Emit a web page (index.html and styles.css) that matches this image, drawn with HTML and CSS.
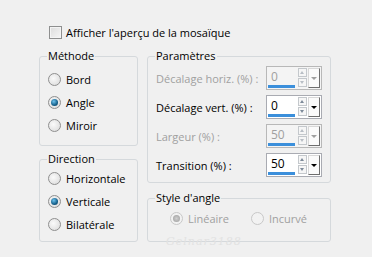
FILE: index.html
```html
<!DOCTYPE html>
<html lang="fr">
<head>
    <meta charset="UTF-8">
    <title>Mosaïque</title>
    <link rel="stylesheet" href="styles.css">
</head>
<body>
    <div class="dialog">
        <div class="check"><span class="box"></span>Afficher l'aperçu de la mosaïque</div>
        <div class="cols">
            <div class="col left">
                <fieldset class="group method">
                    <legend>Méthode</legend>
                    <div class="opt"><span class="radio"></span>Bord</div>
                    <div class="opt"><span class="radio on"></span>Angle</div>
                    <div class="opt"><span class="radio"></span>Miroir</div>
                </fieldset>
                <fieldset class="group direction">
                    <legend>Direction</legend>
                    <div class="opt"><span class="radio"></span>Horizontale</div>
                    <div class="opt"><span class="radio on"></span>Verticale</div>
                    <div class="opt"><span class="radio"></span>Bilatérale</div>
                </fieldset>
            </div>
            <div class="col right">
                <fieldset class="group params">
                    <legend>Paramètres</legend>
                    <div class="row off">
                        <span class="lbl">Décalage horiz. (%) :</span>
                        <div class="spin"><span class="val">0</span><span class="bar"></span><span class="ud"><i class="up"></i><i class="dn"></i></span><span class="drop"></span></div>
                    </div>
                    <div class="row">
                        <span class="lbl">Décalage vert. (%) :</span>
                        <div class="spin"><span class="val">0</span><span class="bar"></span><span class="ud"><i class="up"></i><i class="dn"></i></span><span class="drop"></span></div>
                    </div>
                    <div class="row off">
                        <span class="lbl">Largeur (%) :</span>
                        <div class="spin"><span class="val">50</span><span class="bar"></span><span class="ud"><i class="up"></i><i class="dn"></i></span><span class="drop"></span></div>
                    </div>
                    <div class="row">
                        <span class="lbl">Transition (%) :</span>
                        <div class="spin"><span class="val">50</span><span class="bar"></span><span class="ud"><i class="up"></i><i class="dn"></i></span><span class="drop"></span></div>
                    </div>
                </fieldset>
                <fieldset class="group style">
                    <legend>Style d'angle</legend>
                    <div class="opts">
                        <div class="opt off"><span class="radio on"></span>Linéaire</div>
                        <div class="opt off"><span class="radio"></span>Incurvé</div>
                    </div>
                </fieldset>
            </div>
        </div>
        <div class="sig">Gelnar3188</div>
    </div>
</body>
</html>
```

FILE: styles.css
```css
body {
    margin: 0;
    background-color: #f0f0f0;
    font-family: "Open Sans", sans-serif;
    font-size: 11px;
    color: #000;
}
.dialog {
    position: relative;
    width: 372px;
    height: 257px;
    padding: 24px 0 0 39px;
    box-sizing: border-box;
    white-space: nowrap;
}
.check {
    display: flex;
    align-items: center;
    height: 17px;
    margin-left: 10px;
}
.box {
    width: 11px;
    height: 11px;
    border: 1px solid #8e8f8f;
    background: linear-gradient(135deg, #dcdcdc, #f6f6f6);
    box-shadow: inset 0 0 0 1px #f4f4f4;
    margin-right: 4px;
}
.cols {
    display: flex;
    gap: 9px;
    margin-top: 8px;
}
.col {
    display: flex;
    flex-direction: column;
}
.left {
    width: 99px;
}
.right {
    width: 184px;
}
.group {
    margin: 0;
    border: 1px solid #d5d9dc;
    border-radius: 3px;
    padding: 0 8px;
    box-sizing: border-box;
}
.group legend {
    padding: 0 1px;
    margin-left: -1px;
    line-height: 14px;
}
.method {
    padding-top: 5px;
    padding-bottom: 8px;
}
.direction {
    margin-top: 6px;
    padding-top: 1px;
    padding-bottom: 5px;
}
.opt {
    display: flex;
    align-items: center;
    height: 23px;
}
.radio {
    width: 11px;
    height: 11px;
    border: 1px solid #8f8f8f;
    border-radius: 50%;
    background: radial-gradient(circle at 40% 40%, #fafafa, #d8d8d8);
    margin-right: 5px;
    position: relative;
}
.radio.on::after {
    content: "";
    position: absolute;
    left: 2px;
    top: 2px;
    width: 7px;
    height: 7px;
    border-radius: 50%;
    background: radial-gradient(circle at 40% 35%, #6ec3ee, #145f8a 60%, #0b3d5a);
}
.opt.off {
    color: #a0a0a0;
}
.opt.off .radio {
    border-color: #c8c8c8;
    background: #f2f2f2;
}
.opt.off .radio.on::after {
    background: radial-gradient(circle, #d0d0d0, #9a9a9a);
}
.params {
    padding-top: 3px;
    padding-bottom: 5px;
    display: flex;
    flex-direction: column;
    gap: 5px;
}
.row {
    display: flex;
    align-items: center;
    height: 24px;
}
.lbl {
    width: 110px;
}
.row.off .lbl {
    color: #a0a0a0;
}
.spin {
    position: relative;
    width: 54px;
    height: 22px;
    border: 1px solid #a9abb2;
    background: #fff;
}
.row.off .spin {
    background: #f4f4f4;
    border-color: #b8b8b8;
}
.val {
    position: absolute;
    left: 4px;
    top: 3px;
    line-height: 14px;
    font-size: 12px;
}
.row.off .val {
    color: #a0a0a0;
}
.bar {
    position: absolute;
    left: 1px;
    bottom: 1px;
    width: 27px;
    height: 3px;
    background: #3b8fdb;
}
.ud {
    position: absolute;
    left: 31px;
    top: 1px;
    display: flex;
    flex-direction: column;
    gap: 1px;
}
.ud i {
    position: relative;
    display: block;
    width: 7px;
    height: 7px;
    border: 1px solid #c4c8cc;
    background: #f6f6f6;
}
.ud i::after {
    content: "";
    position: absolute;
    left: 1px;
    top: 2px;
    border-left: 2.5px solid transparent;
    border-right: 2.5px solid transparent;
}
.ud .up::after {
    border-bottom: 3px solid #7d8a99;
}
.ud .dn::after {
    border-top: 3px solid #7d8a99;
}
.drop {
    position: absolute;
    right: 1px;
    top: 1px;
    width: 10px;
    height: 18px;
    background: #fbfbfb;
    border: 1px solid #d8d8d8;
    border-right-color: #6e6e6e;
    border-bottom-color: #6e6e6e;
}
.drop::after {
    content: "";
    position: absolute;
    left: 2px;
    top: 8px;
    border-left: 3px solid transparent;
    border-right: 3px solid transparent;
    border-top: 3px solid #000;
}
.row.off .drop::after {
    border-top-color: #a0a0a0;
}
.row.off .ud .up::after {
    border-bottom-color: #b8bec5;
}
.row.off .ud .dn::after {
    border-top-color: #b8bec5;
}
.style {
    margin-top: 8px;
    padding-top: 2px;
    padding-bottom: 11px;
}
.opts {
    display: flex;
    padding-left: 14px;
    gap: 22px;
}
.sig {
    position: absolute;
    left: 166px;
    top: 235px;
    font-family: "DejaVu Serif", serif;
    font-style: italic;
    font-size: 11px;
    color: #e2e2e2;
    letter-spacing: 1px;
}
```
